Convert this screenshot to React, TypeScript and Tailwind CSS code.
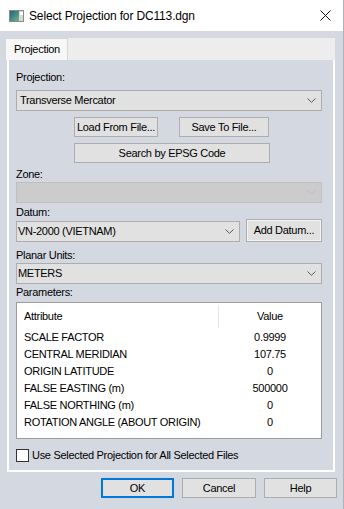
import React from "react";

function Chevron({ disabled }: { disabled?: boolean }) {
  return (
    <svg width="9" height="5" viewBox="0 0 9 5" className="shrink-0">
      <polyline
        points="0.5,0.5 4.5,4.3 8.5,0.5"
        fill="none"
        stroke={disabled ? "#bcbcbc" : "#5a5a5a"}
        strokeWidth="1"
      />
    </svg>
  );
}

function Combo({ text, disabled, padLeft }: { text?: string; disabled?: boolean; padLeft?: boolean }) {
  return (
    <div
      className={
        disabled
          ? "h-[21px] flex items-center justify-between border border-[#bfbfbf] bg-[#cccccc] pr-[5px]"
          : "h-[21px] flex items-center justify-between border border-[#adadad] bg-[#e1e1e1] pr-[5px]"
      }
    >
      <span className={padLeft ? "pl-[3px] leading-[13px]" : "pl-[1px] leading-[13px]"}>{text}</span>
      <Chevron disabled={disabled} />
    </div>
  );
}

function Btn({ children, className }: { children: React.ReactNode; className: string }) {
  return (
    <div
      className={
        "flex items-center justify-center border border-[#adadad] bg-[#e1e1e1] leading-[13px] " + className
      }
    >
      {children}
    </div>
  );
}

function Label({ children, className }: { children: React.ReactNode; className: string }) {
  return <div className={"h-[13px] leading-[13px] " + className}>{children}</div>;
}

const rows: [string, string][] = [
  ["SCALE FACTOR", "0.9999"],
  ["CENTRAL MERIDIAN", "107.75"],
  ["ORIGIN LATITUDE", "0"],
  ["FALSE EASTING (m)", "500000"],
  ["FALSE NORTHING (m)", "0"],
  ["ROTATION ANGLE (ABOUT ORIGIN)", "0"],
];

export default function App() {
  return (
    <div className="w-[344px] h-[509px] bg-[#d4d8e0] border-r border-[#aeb2ba] overflow-hidden text-[11px] tracking-[-0.3px] text-black font-['Liberation_Sans',Arial,sans-serif]">
      {/* Title bar */}
      <div className="h-[31px] bg-white flex items-center">
        <svg width="15" height="12" viewBox="0 0 15 12" className="ml-[9px]">
          <defs>
            <linearGradient id="ig" x1="0" y1="0" x2="1" y2="1">
              <stop offset="0" stopColor="#2f5f7a" />
              <stop offset="0.5" stopColor="#3f8f86" />
              <stop offset="1" stopColor="#7fb089" />
            </linearGradient>
          </defs>
          <rect x="0.5" y="0.5" width="14" height="11" fill="#d8d8d8" stroke="#8a8a8a" />
          <rect x="1" y="1" width="9" height="10" fill="url(#ig)" />
          <rect x="11" y="2" width="3" height="3" fill="#ffffff" />
        </svg>
        <span className="ml-[5px] text-[12px] tracking-[-0.15px] leading-[16px]">Select Projection for DC113.dgn</span>
        <div className="flex-1" />
        <svg width="11" height="11" viewBox="0 0 11 11" className="mr-[12px]">
          <path d="M0.5 0.5 L10.5 10.5 M10.5 0.5 L0.5 10.5" stroke="#111" strokeWidth="1" />
        </svg>
      </div>

      {/* Tab control */}
      <div className="mt-[7px] ml-[7px] w-[328px]">
        <div className="h-[22px] flex bg-[#ededed]">
          <div className="-ml-[2px] w-[63px] h-[22px] bg-[#f7f7f7] border border-b-0 border-[#d6d6d6] flex items-center pl-[8px] leading-[13px]">
            Projection
          </div>
        </div>
        <div className="border-2 border-t-0 border-white bg-[#d4d8e0] pl-[7px] pr-[11px] pt-[11px] pb-[8px] flex flex-col">
          <Label className="">Projection:</Label>
          <div className="mt-[6px]">
            <Combo text="Transverse Mercator" padLeft />
          </div>
          <div className="mt-[6px] flex pl-[58px] gap-[21px]">
            <Btn className="w-[84px] h-[20px]">Load From File...</Btn>
            <Btn className="w-[90px] h-[20px]">Save To File...</Btn>
          </div>
          <div className="mt-[6px] pl-[58px]">
            <Btn className="w-[196px] h-[20px]">Search by EPSG Code</Btn>
          </div>
          <Label className="mt-[5px]">Zone:</Label>
          <div className="mt-[1px]">
            <Combo disabled />
          </div>
          <Label className="mt-[3px]">Datum:</Label>
          <div className="flex gap-[6px] h-[23px]">
            <div className="w-[224px] mt-[2px]">
              <Combo text="VN-2000 (VIETNAM)" />
            </div>
            <Btn className="w-[76px] h-[23px] shadow-[inset_0_0_0_1px_#f4f4f4]">Add Datum...</Btn>
          </div>
          <Label className="mt-[7px]">Planar Units:</Label>
          <div className="mt-[1px]">
            <Combo text="METERS" />
          </div>
          <Label className="mt-[2px]">Parameters:</Label>
          <div className="mt-[3px] h-[137px] bg-white border border-[#9c9c9c] flex flex-col">
            <div className="h-[26px] flex items-center">
              <div className="w-[201px] pl-[7px] leading-[13px]">Attribute</div>
              <div className="w-px h-[23px] bg-[#e5e5e5]" />
              <div className="w-[102px] text-center leading-[13px]">Value</div>
            </div>
            {rows.map(([a, v]) => (
              <div key={a} className="h-[17px] flex items-center">
                <div className="w-[201px] pl-[7px] leading-[13px] whitespace-nowrap">{a}</div>
                <div className="w-px" />
                <div className="w-[102px] text-center leading-[13px]">{v}</div>
              </div>
            ))}
          </div>
          <div className="mt-[10px] flex items-center h-[13px]">
            <div className="w-[13px] h-[13px] bg-white border border-[#333333]" />
            <span className="ml-[3px] leading-[13px]">Use Selected Projection for All Selected Files</span>
          </div>
        </div>
      </div>

      {/* Bottom buttons */}
      <div className="mt-[6px] flex pl-[101px] gap-[8px]">
        <div className="w-[73px] h-[20px] flex items-center justify-center border-2 border-[#0078d7] bg-[#e1e1e1] leading-[13px]">
          OK
        </div>
        <Btn className="w-[74px] h-[20px]">Cancel</Btn>
        <Btn className="w-[73px] h-[20px]">Help</Btn>
      </div>
    </div>
  );
}
